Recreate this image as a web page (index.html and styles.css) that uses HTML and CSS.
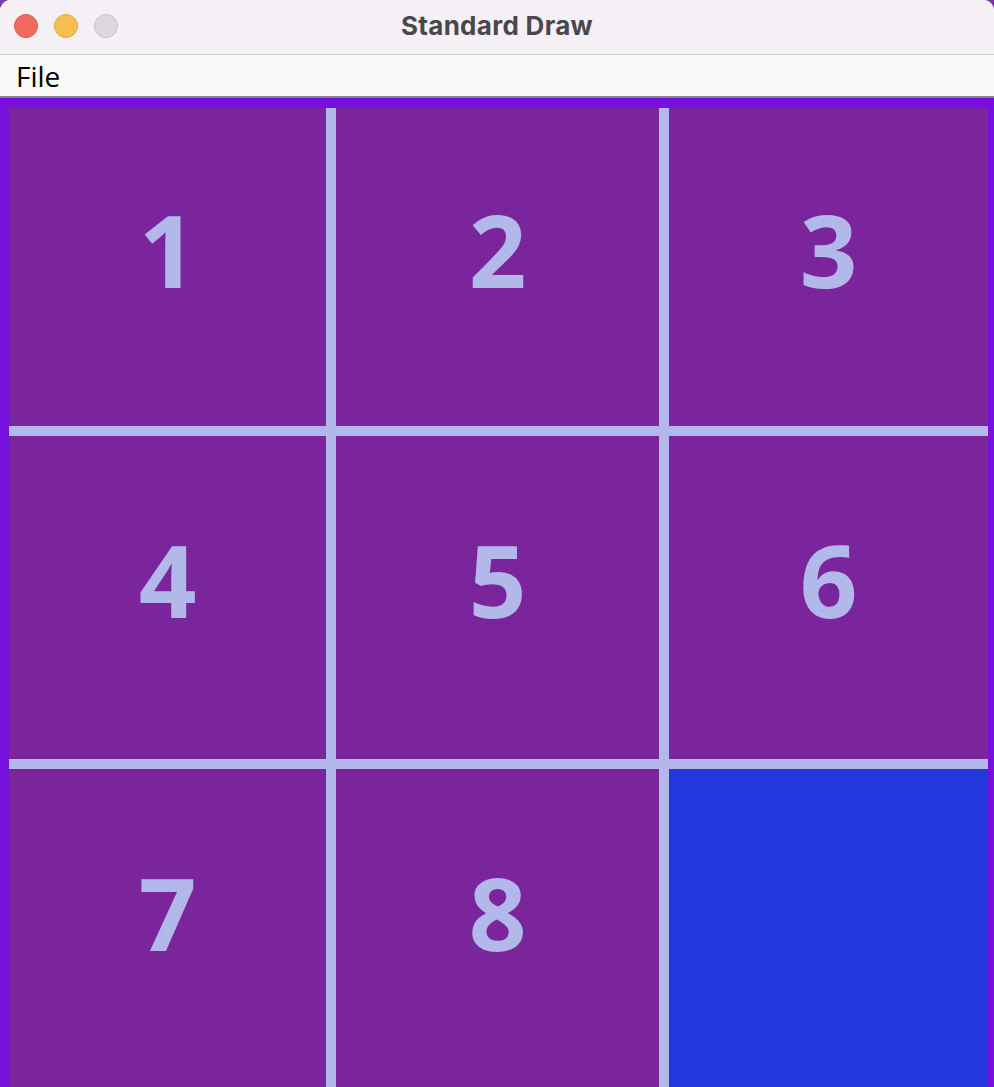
FILE: index.html
```html
<!DOCTYPE html>
<html>
<head>
<meta charset="utf-8">
<title>Standard Draw</title>
<link rel="stylesheet" href="styles.css">
</head>
<body>
<div class="window">
  <div class="titlebar">
    <div class="lights">
      <span class="light red"></span>
      <span class="light yellow"></span>
      <span class="light gray"></span>
    </div>
    <div class="title">Standard Draw</div>
  </div>
  <div class="menubar"><span class="menu-item">File</span></div>
  <div class="canvas">
    <div class="board">
      <div class="tile">1</div>
      <div class="tile">2</div>
      <div class="tile">3</div>
      <div class="tile">4</div>
      <div class="tile">5</div>
      <div class="tile">6</div>
      <div class="tile">7</div>
      <div class="tile">8</div>
      <div class="tile empty"></div>
    </div>
  </div>
</div>
</body>
</html>
```
FILE: styles.css
```css
html, body {
  margin: 0;
  padding: 0;
}
body {
  width: 994px;
  height: 1087px;
  overflow: hidden;
  background: #7a3a9a;
}
.window {
  width: 994px;
  height: 1087px;
  display: flex;
  flex-direction: column;
  border-radius: 11px 11px 0 0;
  overflow: hidden;
  background: #f5f0f6;
}
.titlebar {
  height: 54px;
  flex: none;
  border-bottom: 1px solid #d5d2d6;
  background: #f5f0f6;
  display: flex;
  align-items: center;
  justify-content: center;
  position: relative;
}
.lights {
  position: absolute;
  left: 14px;
  top: 14px;
  display: flex;
  gap: 16px;
}
.light {
  width: 22px;
  height: 22px;
  border-radius: 50%;
  border: 1px solid rgba(0,0,0,0.12);
}
.light.red { background: #ef6b5f; border-color: #dc5a4f; }
.light.yellow { background: #f6bf50; border-color: #dfa83a; }
.light.gray { background: #ddd8de; border-color: #c7c2c8; }
.title {
  font-family: Inter, "Open Sans", "DejaVu Sans", sans-serif;
  font-weight: 700;
  font-size: 26px;
  color: #4a474b;
  letter-spacing: 0.3px;
  margin-top: -4px;
}
.menubar {
  height: 41px;
  flex: none;
  background: #fafafa;
  border-bottom: 2px solid #878787;
  display: flex;
  align-items: center;
  padding-left: 16px;
}
.menu-item {
  font-family: "Open Sans", "DejaVu Sans", sans-serif;
  font-size: 28px;
  color: #000;
  margin-top: 0;
}
.canvas {
  flex: 1;
  background: #7510dd;
  padding: 10px 6px 0 9px;
  overflow: hidden;
}
.board {
  display: grid;
  grid-template-columns: 317px 323px 319px;
  grid-template-rows: 318px 323px 323px;
  gap: 10px;
  background: #b3b8ea;
  width: 979px;
}
.tile {
  background: #7a259b;
  color: #b3b8ea;
  font-family: "Open Sans", "DejaVu Sans", sans-serif;
  font-weight: 700;
  font-size: 101px;
  line-height: 1;
  display: flex;
  align-items: center;
  justify-content: center;
  padding-bottom: 36px;
  box-sizing: border-box;
}
.tile.empty {
  background: #2238dd;
}
```
